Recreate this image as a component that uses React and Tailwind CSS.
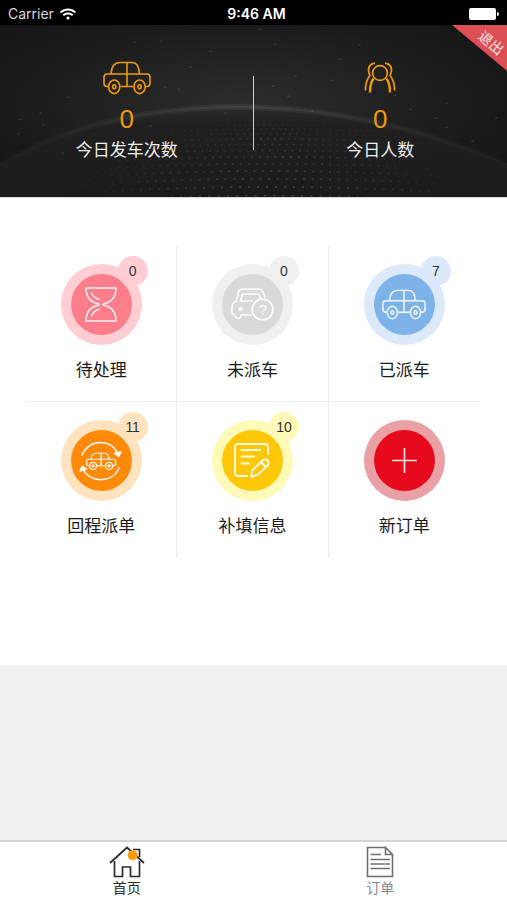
import { FaWifi } from 'react-icons/fa';

const CJK = "font-['Liberation_Sans','Noto_Sans_CJK_SC',sans-serif]";

function CarShape() {
  return (
    <>
      <path d="M8 13C8.5 5 12 1.5 17 1.5H29.5C33.5 1.5 36 6 36.5 13M24 1.5V25.5" />
      <path d="M5 25.5H4Q1 25.5 1 22V16Q1 13 4 13H44Q47 13 47 16V22Q47 25.5 44 25.5H43M17.5 25.5H30.5" />
      <ellipse cx="11.2" cy="25.8" rx="5.6" ry="6.8" />
      <ellipse cx="36.6" cy="25.8" rx="5.6" ry="6.8" />
      <ellipse cx="11.2" cy="25.8" rx="1.6" ry="2" />
      <ellipse cx="36.6" cy="25.8" rx="1.6" ry="2" />
    </>
  );
}

function CarIcon({ className }) {
  return (
    <svg viewBox="0 0 48 34" className={className} fill="none" stroke="currentColor" strokeWidth="1.6" aria-hidden="true">
      <CarShape />
    </svg>
  );
}

function PeopleIcon() {
  return (
    <svg viewBox="0 0 32 32" className="h-8 w-8" fill="none" stroke="currentColor" strokeWidth="1.7" aria-hidden="true">
      <circle cx="16" cy="11" r="7.4" />
      <path d="M11 1.2C6.5 1.8 4.5 4.5 4.5 8C4.5 10.5 5.5 12 6 13.5C3.5 16.5 1.4 20 1.4 28.5" />
      <path d="M21 1.2C25.5 1.8 27.5 4.5 27.5 8C27.5 10.5 26.5 12 26 13.5C28.5 16.5 30.6 20 30.6 28.5" />
      <path d="M9.5 16.5C7 20 6 23.5 6 30.5M22.5 16.5C25 20 26 23.5 26 30.5" strokeWidth="2.4" />
    </svg>
  );
}

function HourglassIcon() {
  return (
    <svg viewBox="0 0 32 35" className="h-[35px] w-8" fill="none" stroke="currentColor" strokeWidth="1.5" strokeLinecap="round" strokeLinejoin="round" aria-hidden="true">
      <path d="M14 17C6 15.5 1 10 1 1H31C31 10 26 15.5 18 17" />
      <path d="M14 18C6 19.5 1 25 1 34H31C31 25 26 19.5 18 18" />
      <path d="M6.5 6C8 9.5 10.5 11.5 14 12.2M6.5 29C8 25.5 10.5 23 14 22.2" />
    </svg>
  );
}

function PendingCarIcon() {
  return (
    <svg viewBox="0 0 43 33" className="h-[33px] w-[43px]" fill="none" stroke="currentColor" strokeWidth="1.7" strokeLinecap="round" strokeLinejoin="round" aria-hidden="true">
      <path d="M34 9L32 4Q31 1 27 1H12Q8.5 1 7.5 4L5.5 13Q1 15 1 19V24Q1 27 4 27Q4.5 30.5 7 30.5Q9.5 30.5 10 27H20" />
      <path d="M21 13H9.5L11 7.5Q11.5 6 13 6H26Q28 6 28.5 8L29.5 10" />
      <circle cx="9.5" cy="21" r="1.3" fill="currentColor" />
      <circle cx="31.6" cy="21.5" r="10.4" />
      <text x="31.6" y="27" textAnchor="middle" fontSize="15" fill="currentColor" stroke="none" fontFamily="Liberation Sans, sans-serif">?</text>
    </svg>
  );
}

function ReturnIcon() {
  return (
    <svg viewBox="0 0 44 40" className="h-10 w-11" fill="none" stroke="currentColor" strokeWidth="1.5" strokeLinecap="round" strokeLinejoin="round" aria-hidden="true">
      <path d="M3 14C7 5.5 14 1.5 21.5 1.5C29.5 1.5 36 6 39 13" />
      <path d="M35.5 12.5L39.8 15.5L42 11Z" fill="currentColor" />
      <path d="M40 27C37 34.5 30 38.7 22 38.7C14 38.7 7 34.5 4 28" />
      <path d="M1 30L3 25.5L7.5 28Z" fill="currentColor" />
      <g transform="translate(7 11.5) scale(0.63 0.52)" strokeWidth="2.2">
        <CarShape />
      </g>
    </svg>
  );
}

function NoteIcon() {
  return (
    <svg viewBox="0 0 36 35" className="h-[35px] w-9" fill="none" stroke="currentColor" strokeWidth="1.8" strokeLinecap="round" strokeLinejoin="round" aria-hidden="true">
      <path d="M13 33H4Q1 33 1 30V4Q1 1 4 1H31Q34 1 34 4V11" />
      <path d="M7.5 7H26M7.5 13.5H20M7.5 20.5H15" />
      <path d="M17 34L18.5 27L29 17Q31.5 15.5 33.5 17.5Q35.5 19.5 34 22L24 31.5ZM27 19L32 24" />
    </svg>
  );
}

function PlusIcon() {
  return (
    <svg viewBox="0 0 25 25" className="h-[25px] w-[25px]" fill="none" stroke="currentColor" strokeWidth="1.6" aria-hidden="true">
      <path d="M12.5 0V25M0 12.5H25" />
    </svg>
  );
}

function HomeIcon() {
  return (
    <svg viewBox="0 0 36 32" className="h-8 w-9" fill="none" stroke="#2b2b2b" strokeWidth="1.7" aria-hidden="true">
      <path d="M1 17L18 1.5L35 17" />
      <path d="M5.5 15V30.5H13.5V21H21.5V30.5H30.5V15M24 3.5H30.5V11" />
      <circle cx="23.7" cy="9.3" r="5" fill="#f99b0c" stroke="none" />
    </svg>
  );
}

function OrderIcon() {
  return (
    <svg viewBox="0 0 28 32" className="h-8 w-7" fill="none" stroke="#6f6f6f" strokeWidth="1.6" aria-hidden="true">
      <path d="M19.5 1.5H1.5V30.5H26.5V8.5L19.5 1.5V8.5H26.5" />
      <path d="M4.5 8.5H15M4.5 13.5H24M4.5 18H24M4.5 22.5H24" />
    </svg>
  );
}

// rows get wider apart and brighter towards the bottom edge
const dots = [];
for (let row = 0; row < 12; row++) {
  const y = 100 + row * 4 + row * row * 0.22;
  const gap = 6 + row * 0.3;
  const half = 120 + row * 9;
  for (let x = -half; x <= half; x += gap) {
    dots.push({
      x: 270 + x,
      y: y + (x * x) / 6000,
      o: (0.06 + row * 0.013) * (1 - Math.abs(x) / (half + 15)),
    });
  }
}

const specks = [
  [134, 17], [161, 16], [210, 26], [68, 72], [190, 42], [40, 88], [20, 94], [165, 62], [43, 100], [18, 109],
  [178, 64], [273, 61], [295, 51], [332, 55], [288, 71], [359, 20], [312, 86], [436, 93], [446, 102], [496, 93],
  [472, 116], [395, 70], [260, 4], [275, 19], [446, 78], [340, 34], [410, 84], [225, 88], [150, 101], [62, 128],
];

const RIM = 'M-20 150C60 100 150 82 240 82C330 82 420 102 527 146';

function HeroBackdrop() {
  return (
    <svg viewBox="0 0 507 172" preserveAspectRatio="none" className="absolute inset-0 h-full w-full" aria-hidden="true">
      <defs>
        <radialGradient id="sky" cx="0.48" cy="0.45" r="0.6">
          <stop offset="0" stopColor="#2c2c2c" />
          <stop offset="1" stopColor="#161616" />
        </radialGradient>
        <linearGradient id="globe" x1="0" y1="0" x2="0" y2="1">
          <stop offset="0" stopColor="#292929" />
          <stop offset="0.2" stopColor="#202020" />
          <stop offset="1" stopColor="#1b1b1b" />
        </linearGradient>
        <linearGradient id="rim" x1="0" y1="0" x2="1" y2="0">
          <stop offset="0" stopColor="#fff" stopOpacity="0" />
          <stop offset="0.48" stopColor="#fff" stopOpacity="0.06" />
          <stop offset="1" stopColor="#fff" stopOpacity="0" />
        </linearGradient>
      </defs>
      <rect width="507" height="172" fill="url(#sky)" />
      <path d={`${RIM}V172H-20Z`} fill="url(#globe)" />
      <path d={RIM} fill="none" stroke="url(#rim)" strokeWidth="6" />
      <path d={RIM} fill="none" stroke="url(#rim)" strokeWidth="2" />
      {specks.map(([x, y]) => (
        <path key={`${x}-${y}`} d={`M${x - 2} ${y + 1}L${x + 1} ${y - 1}L${x + 2} ${y + 1}Z`} fill="#fff" opacity="0.1" />
      ))}
      {dots.map((d, i) => (
        <ellipse key={i} cx={d.x} cy={d.y} rx="1.2" ry="0.9" fill="#fff" opacity={d.o} />
      ))}
    </svg>
  );
}

function StatusBar() {
  return (
    <div className="grid h-[25px] grid-cols-3 items-center bg-black px-2 font-[Inter,sans-serif] text-[14px] leading-5 text-white">
      <div className="flex items-center gap-1.5 pt-0.5 text-[#d8d8d8]">
        Carrier
        <FaWifi className="h-3.5 w-4 text-white" />
      </div>
      <div className="pt-0.5 pl-1.5 text-center font-semibold">9:46 AM</div>
      <div className="flex items-center justify-end pt-0.5">
        <span className="h-3 w-[27px] rounded-xs bg-white" />
        <span className="ml-px h-1 w-0.5 rounded-r bg-white" />
      </div>
    </div>
  );
}

function Stat({ icon, value, label }) {
  return (
    <div className="flex flex-1 flex-col items-center pt-9">
      <div className="flex h-[34px] items-center text-[#ee9a0e]">{icon}</div>
      <div className="mt-2 text-[26px] leading-8 text-[#ee9a0e]">{value}</div>
      <div className="mt-1 text-[17px] leading-6 text-[#eeeeee]">{label}</div>
    </div>
  );
}

const tiles = [
  { label: '待处理', count: 0, ring: 'bg-[#ffcdd2]', disc: 'bg-[#fd7d8b]', icon: <HourglassIcon /> },
  { label: '未派车', count: 0, ring: 'bg-[#f0f0f0]', disc: 'bg-[#d9d9d9]', icon: <PendingCarIcon /> },
  { label: '已派车', count: 7, ring: 'bg-[#dbe9fa]', disc: 'bg-[#7eb3e9]', icon: <CarIcon className="h-[31px] w-11" /> },
  { label: '回程派单', count: 11, ring: 'bg-[#ffe3bf]', disc: 'bg-[#ff8a0a]', icon: <ReturnIcon /> },
  { label: '补填信息', count: 10, ring: 'bg-[#fffab8]', disc: 'bg-[#fec809]', icon: <NoteIcon /> },
  { label: '新订单', ring: 'bg-[#e9a1a6]', disc: 'bg-[#e60a1c]', icon: <PlusIcon /> },
];

function Tile({ label, count, ring, disc, icon }) {
  return (
    <button type="button" className="flex h-[156px] flex-col items-center border-[#ececec] pt-[18px] not-nth-[3n]:border-r nth-[-n+3]:border-b">
      <span className={`relative flex h-[81px] w-[81px] items-center justify-center rounded-full ${ring}`}>
        <span className={`flex h-[61px] w-[61px] items-center justify-center rounded-full text-white/90 ${disc}`}>{icon}</span>
        {count !== undefined && (
          <span className={`absolute -top-2 -right-1.5 flex h-[30px] w-[30px] items-center justify-center rounded-full text-sm text-[#333333] ${ring}`}>
            {count}
          </span>
        )}
      </span>
      <span className="mt-3.5 text-[17px] leading-6 text-[#1a1a1a]">{label}</span>
    </button>
  );
}

export default function App() {
  return (
    <div className={`flex min-h-screen flex-col bg-[#f0f0f0] ${CJK}`}>
      <StatusBar />

      <header className="relative h-[173px] overflow-hidden border-b border-[#d9d9d9] bg-[#1c1c1c]">
        <HeroBackdrop />
        <div className="relative flex h-full">
          <Stat icon={<CarIcon className="h-[34px] w-12" />} value="0" label="今日发车次数" />
          <div className="mt-[51px] -ml-px h-[74px] w-px bg-[#cfcfcf]" />
          <Stat icon={<PeopleIcon />} value="0" label="今日人数" />
        </div>
        <button type="button" className="absolute top-0 right-0 h-[46px] w-[55px] bg-[#dc4f55] text-sm text-[#ffe6e6] [clip-path:polygon(0_0,100%_0,100%_100%)]">
          <span className="absolute top-2 right-0.5 rotate-40 leading-5">退出</span>
        </button>
      </header>

      <main className="bg-white pt-12 pr-[27px] pb-[107px] pl-[26px]">
        <div className="grid grid-cols-3">
          {tiles.map((tile) => (
            <Tile key={tile.label} {...tile} />
          ))}
        </div>
      </main>

      <nav className="mt-auto flex border-t-2 border-[#d4d4d4] bg-white text-sm leading-5">
        <a href="#home" className="flex flex-1 flex-col items-center pt-1 pb-0.5 text-[#2b2b2b]">
          <HomeIcon />
          首页
        </a>
        <a href="#orders" className="flex flex-1 flex-col items-center pt-1 pb-0.5 text-[#8a8a8a]">
          <OrderIcon />
          订单
        </a>
      </nav>
    </div>
  );
}
